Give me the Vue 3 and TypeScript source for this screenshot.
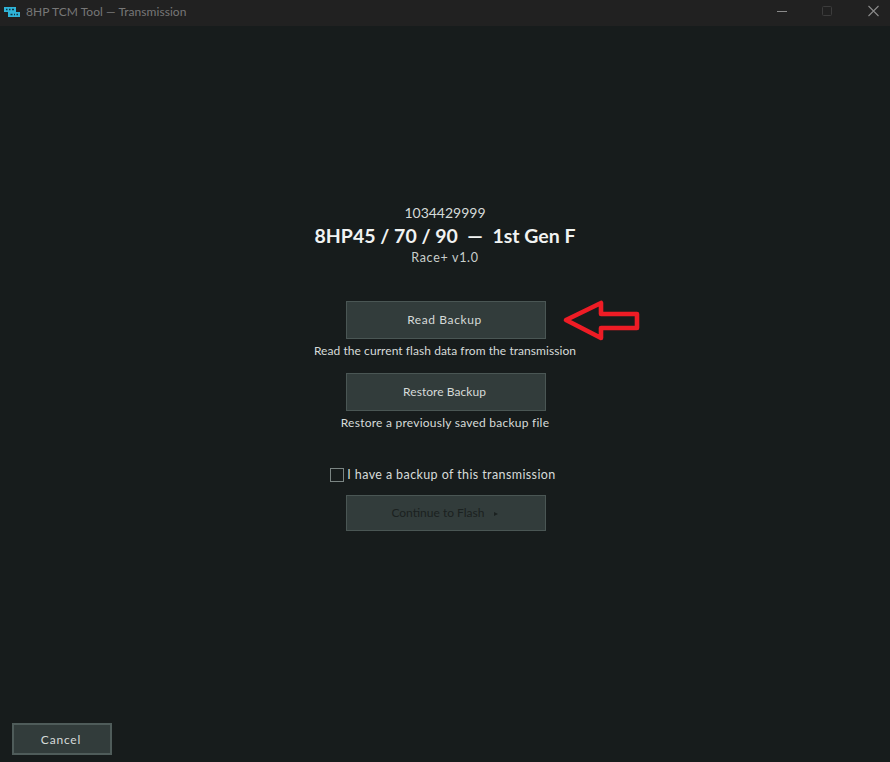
<script setup lang="ts">
const actions = [
  { key: 'read', label: 'Read Backup', hint: 'Read the current flash data from the transmission' },
  { key: 'restore', label: 'Restore Backup', hint: 'Restore a previously saved backup file' },
]
</script>

<template>
  <div class="window">
    <header class="titlebar">
      <svg class="app-icon" width="16" height="10" viewBox="0 0 16 10">
        <rect x="0" y="0" width="12" height="5" fill="#2fb4d8" />
        <rect x="4" y="5" width="12" height="5" fill="#2fb4d8" />
        <path d="M2 2.5h1.5M5 2.5h1.5M8 2.5h2M6.5 7.5h2M10 7.5h1M12.5 7.5h1.5" stroke="#123543" stroke-width="1.4" />
      </svg>
      <span class="title">8HP TCM Tool — Transmission</span>
      <div class="controls">
        <svg class="ctl" width="46" height="26" viewBox="0 0 46 26"><path d="M25 11.5h10" stroke="#8a8a8a" /></svg>
        <svg class="ctl" width="46" height="26" viewBox="0 0 46 26"><rect x="24.5" y="6.5" width="9" height="9" rx="1" fill="none" stroke="#3c3c3c" /></svg>
        <svg class="ctl" width="46" height="26" viewBox="0 0 46 26"><path d="M24.5 6l10 10M34.5 6l-10 10" stroke="#8a8a8a" stroke-width="1.1" /></svg>
      </div>
    </header>

    <main class="body">
      <section class="center">
        <div class="serial">1034429999</div>
        <h1 class="model">8HP45 / 70 / 90&nbsp; — &nbsp;1st Gen F</h1>
        <div class="tune">Race+ v1.0</div>

        <div class="actions">
          <div v-for="a in actions" :key="a.key" class="action" :class="a.key">
            <button class="btn">{{ a.label }}</button>
            <p class="hint">{{ a.hint }}</p>
          </div>
        </div>

        <label class="check">
          <span class="box"></span>
          <span>I have a backup of this transmission</span>
        </label>
        <button class="btn btn-disabled">Continue to Flash&nbsp; <span class="tri"></span></button>

        <svg class="arrow" width="84" height="46" viewBox="0 0 84 46">
          <path d="M7 22 L42 5 L42 16 L78 16 L78 30 L42 30 L42 40 Z" fill="none" stroke="#ee1c25" stroke-width="4.6" stroke-linejoin="round" />
        </svg>
      </section>
      <footer class="footer">
        <button class="cancel">Cancel</button>
      </footer>
    </main>
  </div>
</template>

<style>
body { margin: 0; background: #171c1c; }
</style>

<style scoped>
.window {
  width: 890px;
  height: 762px;
  display: flex;
  flex-direction: column;
  background: #171c1c;
  color: #dfe4e2;
  font-family: Lato, "Open Sans", sans-serif;
  overflow: hidden;
}
.titlebar {
  height: 26px;
  box-sizing: border-box;
  flex: none;
  display: flex;
  align-items: center;
  background: #212121;
  padding-left: 4px;
}
.app-icon { flex: none; margin: 0 6px 2px 0; }
.title { font-size: 12px; color: #777; letter-spacing: .05px; margin-bottom: 3px; }
.controls { margin-left: auto; display: flex; }
.ctl { display: block; }
.body {
  flex: 1;
  display: flex;
  flex-direction: column;
  min-height: 0;
}
.center {
  position: relative;
  width: 300px;
  margin: 0 auto;
  padding-top: 178px;
  display: flex;
  flex-direction: column;
  align-items: center;
}
.serial { font-size: 14px; line-height: 17px; color: #d5dad8; }
.model { margin: 3px 0 0; font-size: 19.5px; line-height: 24px; font-weight: 700; color: #f1f3f2; white-space: nowrap; }
.tune { margin-top: 2px; font-size: 12.5px; line-height: 16px; letter-spacing: .7px; color: #c9cfcc; }
.actions { margin-top: 35px; display: flex; flex-direction: column; gap: 15px; }
.action { display: flex; flex-direction: column; align-items: center; }
.btn {
  width: 200px;
  height: 38px;
  box-sizing: border-box;
  margin-left: 1px;
  background: #323c3b;
  border: 1px solid #4a5654;
  color: #d6dbd9;
  font: inherit;
  font-size: 12px;
  padding: 0 2px 2px 0;
}
.read .btn { letter-spacing: .6px; }
.restore .btn { letter-spacing: .05px; }
.hint { margin: 4px 0 0; font-size: 12px; line-height: 15px; color: #d6dbd9; white-space: nowrap; }
.read .hint { letter-spacing: .06px; }
.restore .hint { letter-spacing: .24px; }
.check {
  margin-top: 37px;
  display: flex;
  align-items: center;
  gap: 3px;
  margin-right: 4px;
  font-size: 12.5px;
  letter-spacing: .4px;
  color: #d6dbd9;
}
.box { width: 12px; height: 12px; border: 1px solid #7b8583; display: block; }
.btn-disabled { margin-top: 13px; height: 36px; color: #1b2120; }
.tri {
  display: inline-block;
  border-left: 4px solid #1b2120;
  border-top: 2.5px solid transparent;
  border-bottom: 2.5px solid transparent;
  vertical-align: 1px;
  margin-left: 3px;
}
.arrow { position: absolute; left: 264px; top: 272px; }
.footer { margin-top: auto; padding: 0 0 7px 12px; }
.cancel {
  display: block;
  width: 100px;
  height: 32px;
  box-sizing: border-box;
  background: #323c3b;
  border: 2px solid #4f5c5a;
  color: #d6dbd9;
  font: inherit;
  font-size: 12px;
  letter-spacing: .8px;
  padding: 0 2px 0 0;
}
</style>
